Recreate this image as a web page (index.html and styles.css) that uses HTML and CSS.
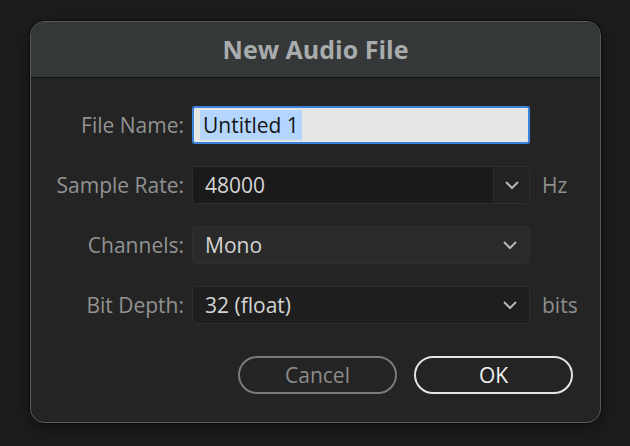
FILE: index.html
```html
<!DOCTYPE html>
<html lang="en">
<head>
  <meta charset="UTF-8">
  <title>New Audio File</title>
  <link rel="stylesheet" href="styles.css">
</head>
<body>
  <div class="dialog">
    <div class="title-bar">New Audio File</div>
    <div class="dialog-body">
      <div class="row">
        <label class="label">File Name:</label>
        <div class="field text-field"><span class="selected">Untitled 1</span></div>
      </div>
      <div class="row">
        <label class="label">Sample Rate:</label>
        <div class="field combo">
          <span class="value">48000</span>
          <span class="combo-btn">
            <svg width="16" height="10" viewBox="0 0 16 10"><path d="M2 2 L8 8 L14 2" fill="none" stroke="#b5b5b5" stroke-width="2"/></svg>
          </span>
        </div>
        <span class="unit">Hz</span>
      </div>
      <div class="row">
        <label class="label">Channels:</label>
        <div class="field select light">
          <span class="value">Mono</span>
          <svg width="16" height="10" viewBox="0 0 16 10"><path d="M2 2 L8 8 L14 2" fill="none" stroke="#b5b5b5" stroke-width="2"/></svg>
        </div>
      </div>
      <div class="row">
        <label class="label">Bit Depth:</label>
        <div class="field select">
          <span class="value">32 (float)</span>
          <svg width="16" height="10" viewBox="0 0 16 10"><path d="M2 2 L8 8 L14 2" fill="none" stroke="#b5b5b5" stroke-width="2"/></svg>
        </div>
        <span class="unit">bits</span>
      </div>
      <div class="buttons">
        <button class="button cancel">Cancel</button>
        <button class="button ok">OK</button>
      </div>
    </div>
  </div>
</body>
</html>
```

FILE: styles.css
```css
body {
  margin: 0;
  width: 630px;
  height: 446px;
  background: #1d1d1d;
  font-family: 'Open Sans', 'Noto Sans', sans-serif;
  overflow: hidden;
}

.dialog {
  margin: 21px 0 0 30px;
  width: 569px;
  height: 400px;
  background: #242424;
  border: 1px solid #595959;
  border-radius: 14px;
  box-shadow: 0 0 0 1px #0e0e0e, 0 4px 20px rgba(0, 0, 0, 0.5);
  overflow: hidden;
}

.title-bar {
  height: 55px;
  background: #353839;
  border-bottom: 1px solid #111;
  color: #a9acac;
  font-weight: 700;
  font-size: 25px;
  text-align: center;
  line-height: 54px;
}

.dialog-body {
  padding: 28px 0 0 0;
  display: flex;
  flex-direction: column;
  gap: 22px;
}

.row {
  display: flex;
  align-items: center;
  height: 38px;
}

.label {
  width: 153px;
  text-align: right;
  color: #929292;
  font-size: 21px;
  margin-right: 8px;
  white-space: nowrap;
}

.field {
  width: 338px;
  height: 38px;
  box-sizing: border-box;
  border-radius: 4px;
  display: flex;
  align-items: center;
  font-size: 21px;
  color: #d4d4d4;
}

.text-field {
  background: #e6e6e6;
  border: 2px solid #3f82dc;
  border-radius: 3px;
  padding-left: 6px;
  color: #151515;
}

.selected {
  background: #b4d5fe;
  padding: 0 3px;
  line-height: 30px;
}

.combo {
  background: #1a1a1a;
  border: 1px solid #2f2f2f;
}

.combo .value {
  flex: 1;
  padding-left: 12px;
}

.combo-btn {
  width: 35px;
  height: 100%;
  border-left: 1px solid #2f2f2f;
  background: #222;
  display: flex;
  align-items: center;
  justify-content: center;
}

.select {
  background: #1e1e1e;
  border: 1px solid #2f2f2f;
  justify-content: space-between;
  padding: 0 11px 0 12px;
}

.select.light {
  background: #2a2a2a;
}

.unit {
  margin-left: 12px;
  color: #8e8e8e;
  font-size: 21px;
}

.buttons {
  display: flex;
  gap: 17px;
  margin: 10px 0 0 207px;
}

.button {
  width: 159px;
  height: 38px;
  border-radius: 19px;
  background: transparent;
  font-family: inherit;
  font-size: 21px;
  padding: 0;
}

.cancel {
  border: 2px solid #7a7a7a;
  color: #8c8c8c;
}

.ok {
  border: 2px solid #e3e3e3;
  color: #f2f2f2;
}
```
